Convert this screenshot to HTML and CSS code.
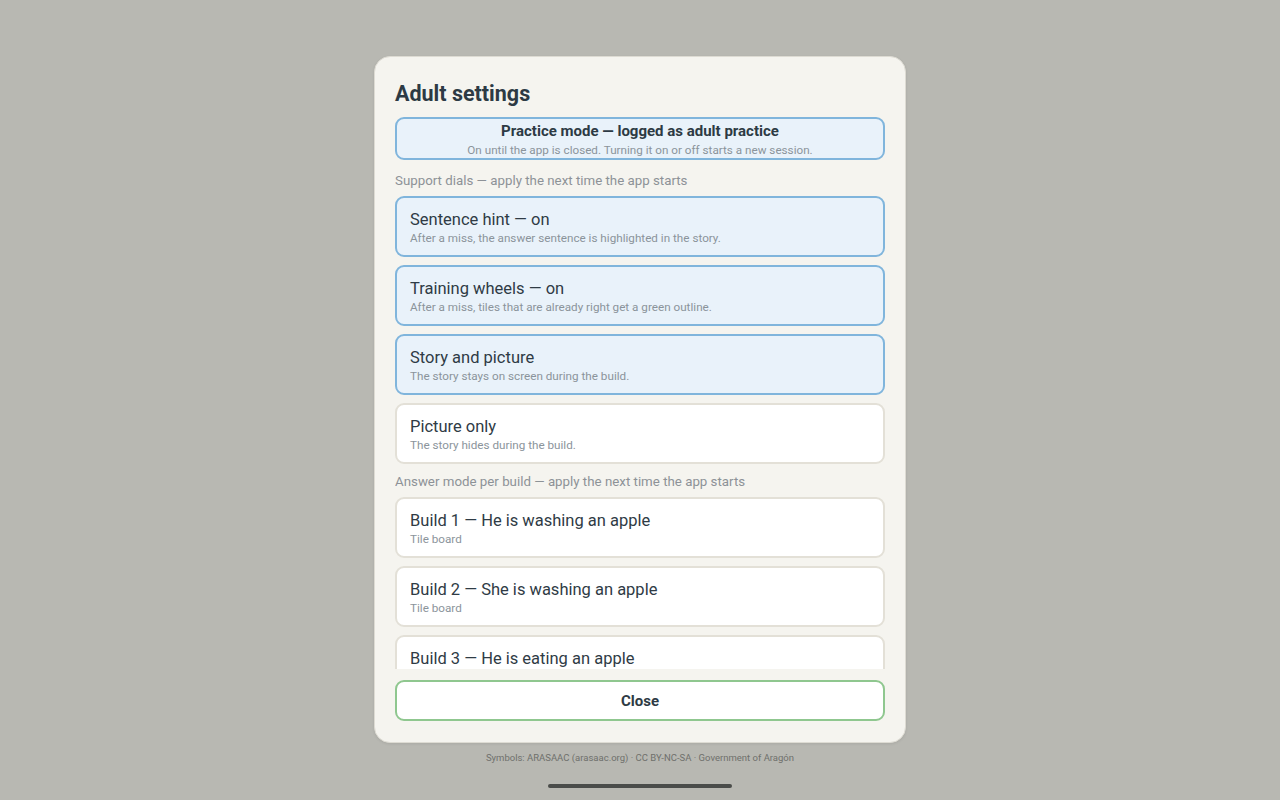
FILE: index.html
```html
<!DOCTYPE html>
<html lang="en">
<head>
<meta charset="utf-8">
<title>Adult settings</title>
<link rel="stylesheet" href="styles.css">
</head>
<body>
<div class="screen">
  <div class="modal">
    <h2 class="modal-title">Adult settings</h2>
    <div class="scroll">
      <div class="practice">
        <div class="practice-title">Practice mode — logged as adult practice</div>
        <div class="practice-sub">On until the app is closed. Turning it on or off starts a new session.</div>
      </div>
      <div class="section-label first">Support dials — apply the next time the app starts</div>
      <div class="cards">
        <div class="card on">
          <div class="card-title">Sentence hint — on</div>
          <div class="card-sub">After a miss, the answer sentence is highlighted in the story.</div>
        </div>
        <div class="card on">
          <div class="card-title">Training wheels — on</div>
          <div class="card-sub">After a miss, tiles that are already right get a green outline.</div>
        </div>
        <div class="card on">
          <div class="card-title">Story and picture</div>
          <div class="card-sub">The story stays on screen during the build.</div>
        </div>
        <div class="card">
          <div class="card-title">Picture only</div>
          <div class="card-sub">The story hides during the build.</div>
        </div>
      </div>
      <div class="section-label">Answer mode per build — apply the next time the app starts</div>
      <div class="cards">
        <div class="card">
          <div class="card-title">Build 1 — He is washing an apple</div>
          <div class="card-sub">Tile board</div>
        </div>
        <div class="card">
          <div class="card-title">Build 2 — She is washing an apple</div>
          <div class="card-sub">Tile board</div>
        </div>
        <div class="card">
          <div class="card-title">Build 3 — He is eating an apple</div>
          <div class="card-sub">Tile board</div>
        </div>
      </div>
    </div>
    <button class="close-btn" type="button">Close</button>
  </div>
  <div class="credits">Symbols: ARASAAC (arasaac.org) · CC BY-NC-SA · Government of Aragón</div>
  <div class="home-bar"></div>
</div>
</body>
</html>
```

FILE: styles.css
```css
* {
  box-sizing: border-box;
}

html, body {
  margin: 0;
  padding: 0;
  height: 100%;
}

body {
  background: #b8b8b2;
  font-family: Roboto, "Noto Sans", "Liberation Sans", sans-serif;
  color: #2d3a44;
  overflow: hidden;
}

.screen {
  display: flex;
  flex-direction: column;
  align-items: center;
  padding-top: 56px;
}

.modal {
  width: 532px;
  height: 687px;
  background: #f5f4ef;
  border: 1px solid #dddbd3;
  border-radius: 16px;
  padding: 22px 20px 21px 20px;
  display: flex;
  flex-direction: column;
  box-shadow: 0 1px 3px rgba(0, 0, 0, 0.08);
}

.modal-title {
  margin: 0 0 8px 0;
  font-size: 21.5px;
  line-height: 30px;
  font-weight: 700;
  color: #2d3a44;
}

/* scrolling list of settings; the last card is clipped at the bottom edge */
.scroll {
  height: 552px;
  overflow: hidden;
  flex: none;
}

.practice {
  height: 43px;
  border: 2px solid #80b5dc;
  background: #e9f2fa;
  border-radius: 9px;
  padding-top: 3px;
  text-align: center;
}

.practice-title {
  font-size: 15px;
  line-height: 18px;
  font-weight: 700;
  color: #2d3a44;
}

.practice-sub {
  margin-top: 3px;
  font-size: 11.7px;
  line-height: 14px;
  color: #8b949b;
}

.section-label {
  margin: 8px 0 5px 0;
  font-size: 13.3px;
  line-height: 20px;
  color: #8d9297;
}

.section-label.first {
  margin-top: 11px;
}

.cards {
  display: flex;
  flex-direction: column;
  gap: 8px;
}

.card {
  height: 61px;
  flex: none;
  background: #ffffff;
  border: 2px solid #e3e0d7;
  border-radius: 9px;
  padding: 12px 13px 0 13px;
}

.card.on {
  background: #e9f2fa;
  border-color: #80b5dc;
}

.card-title {
  font-size: 16.5px;
  line-height: 20px;
  color: #2f3b45;
}

.card-sub {
  margin-top: 0;
  font-size: 11.7px;
  line-height: 16px;
  color: #8b949b;
}

.close-btn {
  margin-top: 11px;
  height: 41px;
  width: 100%;
  flex: none;
  background: #ffffff;
  border: 2px solid #8fc78f;
  border-radius: 9px;
  font-family: inherit;
  font-size: 15px;
  font-weight: 700;
  color: #2d3a44;
  padding: 0;
}

.credits {
  margin-top: 9px;
  font-size: 9.5px;
  line-height: 12px;
  color: #6f706c;
}

.home-bar {
  margin-top: 20px;
  width: 184px;
  height: 4px;
  border-radius: 2px;
  background: #4a4c4a;
}
```
